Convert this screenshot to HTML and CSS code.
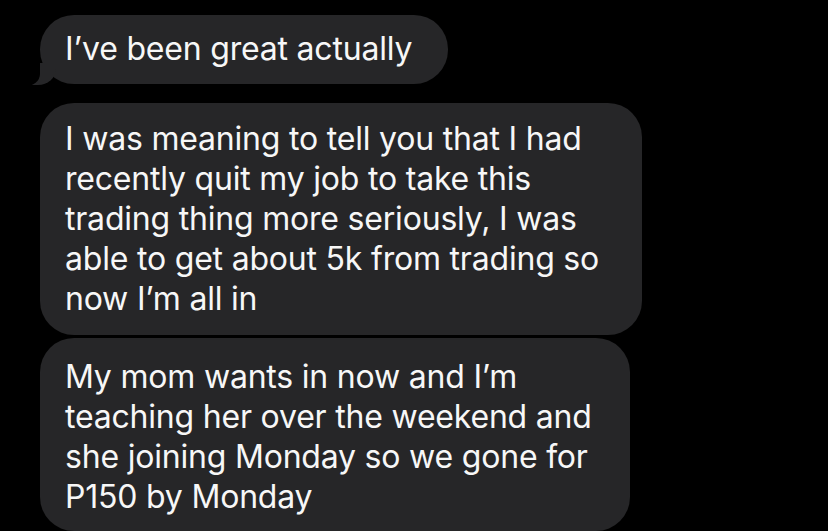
FILE: index.html
```html
<!DOCTYPE html>
<html>
<head>
<meta charset="utf-8">
<link rel="stylesheet" href="styles.css">
</head>
<body>
<div class="thread">
  <div class="bubble b1 tail">I’ve been great actually</div>
  <div class="bubble b2">I was meaning to tell you that I had<br>recently quit my job to take this<br>trading thing more seriously, I was<br>able to get about 5k from trading so<br>now I’m all in</div>
  <div class="bubble b3">My mom wants in now and I’m<br>teaching her over the weekend and<br>she joining Monday so we gone for<br>P150 by Monday</div>
</div>
</body>
</html>
```

FILE: styles.css
```css
html, body {
  margin: 0;
  padding: 0;
  background: #000;
  width: 828px;
  height: 531px;
  overflow: hidden;
}
.thread {
  display: flex;
  flex-direction: column;
  align-items: flex-start;
  padding: 15px 0 0 40px;
  font-family: "Inter", "Noto Sans", sans-serif;
  font-size: 32px;
  line-height: 40px;
  letter-spacing: -0.2px;
  color: #f7f7f7;
}
.bubble {
  position: relative;
  background: #262628;
  border-radius: 34px;
  padding: 15px 25px 15px 25px;
  white-space: nowrap;
  box-sizing: border-box;
}
.b1 {
  width: 408px;
  height: 69px;
  padding-top: 14px;
}
.b2 {
  margin-top: 19px;
  width: 602px;
  height: 232px;
  padding-top: 16px;
}
.b3 {
  margin-top: 3px;
  width: 590px;
  height: 193px;
  padding-top: 19px;
}
.tail::before {
  content: "";
  position: absolute;
  left: -10px;
  bottom: -1px;
  width: 26px;
  height: 22px;
  background: #262628;
  border-bottom-right-radius: 18px 16px;
}
.tail::after {
  content: "";
  position: absolute;
  left: -26px;
  bottom: -2px;
  width: 26px;
  height: 24px;
  background: #000;
  border-bottom-right-radius: 14px 12px;
}
```
